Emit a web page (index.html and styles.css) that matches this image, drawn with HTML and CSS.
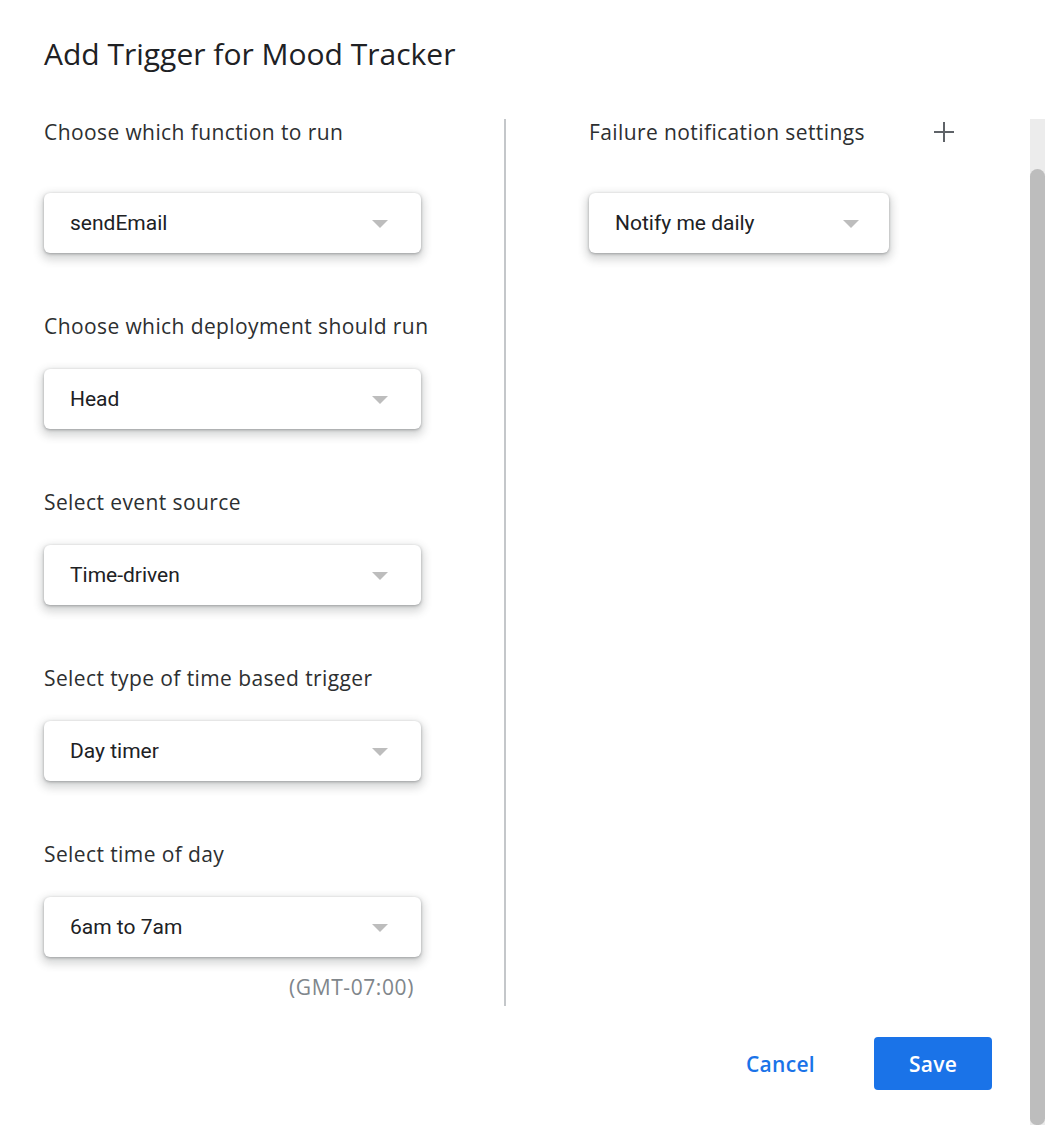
FILE: index.html
```html
<!DOCTYPE html>
<html lang="en">
<head>
<meta charset="utf-8">
<title>Add Trigger for Mood Tracker</title>
<link rel="stylesheet" href="styles.css">
</head>
<body>
<div class="dialog">
  <h1 class="title">Add Trigger for Mood Tracker</h1>
  <div class="body">
    <div class="content">
      <div class="columns">
        <div class="col-left">
          <div class="field first">
            <div class="label">Choose which function to run</div>
            <div class="select"><span>sendEmail</span><i class="arrow"></i></div>
          </div>
          <div class="field">
            <div class="label">Choose which deployment should run</div>
            <div class="select"><span>Head</span><i class="arrow"></i></div>
          </div>
          <div class="field">
            <div class="label">Select event source</div>
            <div class="select"><span>Time-driven</span><i class="arrow"></i></div>
          </div>
          <div class="field">
            <div class="label">Select type of time based trigger</div>
            <div class="select"><span>Day timer</span><i class="arrow"></i></div>
          </div>
          <div class="field">
            <div class="label">Select time of day</div>
            <div class="select"><span>6am to 7am</span><i class="arrow"></i></div>
            <div class="tz">(GMT-07:00)</div>
          </div>
        </div>
        <div class="divider"></div>
        <div class="col-right">
          <div class="right-head">
            <div class="label">Failure notification settings</div>
            <svg class="plus" width="24" height="24" viewBox="0 0 24 24" aria-hidden="true" shape-rendering="crispEdges"><path d="M11 2h2v20h-2zM2 11h20v2H2z" fill="#5f6368"/></svg>
          </div>
          <div class="select narrow"><span>Notify me daily</span><i class="arrow"></i></div>
        </div>
      </div>
      <div class="footer">
        <button class="btn cancel">Cancel</button>
        <button class="btn save">Save</button>
      </div>
    </div>
    <div class="scrollbar"><div class="thumb"></div></div>
  </div>
</div>
</body>
</html>
```
FILE: styles.css
```css
html, body {
  margin: 0;
  padding: 0;
  background: #fff;
}
body {
  font-family: "Open Sans", Roboto, sans-serif;
  color: #202124;
}
.dialog {
  display: flex;
  flex-direction: column;
  height: 1128px;
}
.title {
  margin: 0;
  padding: 34px 0 0 44px;
  height: 119px;
  box-sizing: border-box;
  font-size: 30px;
  line-height: 40px;
  font-weight: 400;
  color: #202124;
}
.body {
  display: flex;
  flex: 1;
  min-height: 0;
  padding-bottom: 3px;
}
.content {
  flex: 1;
  display: flex;
  flex-direction: column;
}
.columns {
  display: flex;
  padding-left: 44px;
}
.col-left {
  width: 377px;
  display: flex;
  flex-direction: column;
  padding-bottom: 7px;
}
.field {
  display: flex;
  flex-direction: column;
  padding-top: 61px;
}
.field.first {
  padding-top: 1px;
}
.label {
  font-size: 21px;
  letter-spacing: 0.4px;
  line-height: 24px;
  color: #2d2f31;
  margin-bottom: 31px;
  white-space: nowrap;
}
.field.first .label {
  margin-bottom: 49px;
}
.select {
  height: 60px;
  box-sizing: border-box;
  display: flex;
  align-items: center;
  justify-content: space-between;
  padding: 0 33px 0 26px;
  background: #fff;
  border-radius: 6px;
  box-shadow: 0 1px 3px rgba(60, 64, 67, 0.4), 0 4px 8px 3px rgba(60, 64, 67, 0.2);
  font-family: Roboto, "Liberation Sans", sans-serif;
  font-size: 21px;
  color: #202124;
}
.select.narrow {
  width: 300px;
  padding-right: 30px;
}
.arrow {
  width: 0;
  height: 0;
  border-left: 8px solid transparent;
  border-right: 8px solid transparent;
  border-top: 8px solid #bdbdbd;
  margin-top: 2px;
}
.tz {
  align-self: flex-end;
  margin-top: 18px;
  margin-right: 7px;
  font-size: 21px;
  letter-spacing: 0.6px;
  line-height: 24px;
  color: #80868b;
}
.divider {
  width: 2px;
  background: #c4c7ca;
  margin-left: 83px;
}
.col-right {
  margin-left: 83px;
  padding-top: 1px;
  width: 367px;
}
.right-head {
  display: flex;
  justify-content: space-between;
  align-items: center;
  margin-bottom: 49px;
}
.right-head .label {
  margin-bottom: 0;
}
.plus {
  display: block;
}
.footer {
  display: flex;
  justify-content: flex-end;
  align-items: center;
  gap: 25px;
  padding: 31px 38px 0 0;
}
.btn {
  font-family: "Open Sans", Roboto, sans-serif;
  font-size: 21px;
  letter-spacing: 0.3px;
  font-weight: 600;
  border: none;
  border-radius: 4px;
  height: 53px;
  cursor: pointer;
}
.cancel {
  background: transparent;
  color: #1a73e8;
  padding: 0 34px;
}
.save {
  background: #1a73e8;
  color: #fff;
  width: 118px;
}
.scrollbar {
  width: 15px;
  margin-right: 7px;
  background: #ececec;
  display: flex;
  flex-direction: column;
  padding-top: 50px;
  box-sizing: border-box;
}
.thumb {
  flex: 1;
  background: #bdbdbd;
  border-radius: 8px 8px 7px 7px;
}
```
